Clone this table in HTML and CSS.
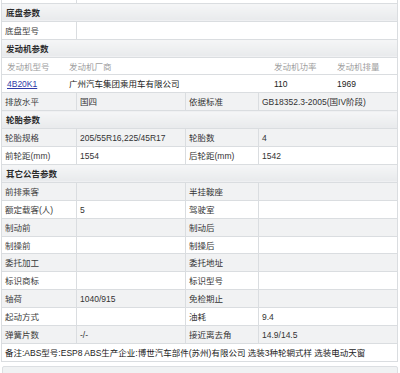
FILE: index.html
```html
<!DOCTYPE html>
<html lang="zh">
<head>
<meta charset="utf-8">
<link rel="stylesheet" href="styles.css">
</head>
<body>
<div class="wrap">
<table class="spec">
  <colgroup><col class="c1"><col class="c2"><col class="c3"><col class="c4"></colgroup>
  <tr class="stub"><td></td><td colspan="3"></td></tr>
  <tr class="head"><td colspan="4">底盘参数</td></tr>
  <tr><td>底盘型号</td><td colspan="3"></td></tr>
  <tr class="head"><td colspan="4">发动机参数</td></tr>
  <tr class="eng-row"><td colspan="4" class="eng-cell">
    <div class="eng eng-lbl"><span>发动机型号</span><span>发动机厂商</span><span>发动机功率</span><span>发动机排量</span></div>
  </td></tr>
  <tr class="eng-row"><td colspan="4" class="eng-cell">
    <div class="eng"><a href="#" class="link">4B20K1</a><span>广州汽车集团乘用车有限公司</span><span>110</span><span>1969</span></div>
  </td></tr>
  <tr class="alt"><td>排放水平</td><td>国四</td><td>依据标准</td><td>GB18352.3-2005(国IV阶段)</td></tr>
  <tr class="head"><td colspan="4">轮胎参数</td></tr>
  <tr class="alt"><td>轮胎规格</td><td>205/55R16,225/45R17</td><td>轮胎数</td><td>4</td></tr>
  <tr><td>前轮距(mm)</td><td>1554</td><td>后轮距(mm)</td><td>1542</td></tr>
  <tr class="head"><td colspan="4">其它公告参数</td></tr>
  <tr class="alt"><td>前排乘客</td><td></td><td>半挂鞍座</td><td></td></tr>
  <tr><td>额定载客(人)</td><td>5</td><td>驾驶室</td><td></td></tr>
  <tr class="alt"><td>制动前</td><td></td><td>制动后</td><td></td></tr>
  <tr><td>制操前</td><td></td><td>制操后</td><td></td></tr>
  <tr class="alt"><td>委托加工</td><td></td><td>委托地址</td><td></td></tr>
  <tr><td>标识商标</td><td></td><td>标识型号</td><td></td></tr>
  <tr class="alt"><td>轴荷</td><td>1040/915</td><td>免检期止</td><td></td></tr>
  <tr><td>起动方式</td><td></td><td>油耗</td><td>9.4</td></tr>
  <tr class="alt"><td>弹簧片数</td><td>-/-</td><td>接近离去角</td><td>14.9/14.5</td></tr>
  <tr class="note"><td colspan="4">备注:ABS型号:ESP8 ABS生产企业:博世汽车部件(苏州)有限公司 选装3种轮辋式样 选装电动天窗</td></tr>
</table>
<div class="next-box"></div>
</div>
</body>
</html>
```
FILE: styles.css
```css
html, body {
  margin: 0;
  padding: 0;
  background: #ffffff;
}
body {
  font-family: "Liberation Sans", "Noto Sans CJK SC", sans-serif;
  font-size: 8.5px;
  color: #333333;
}
.wrap {
  padding: 0 3px 0 1px;
}
.spec {
  width: 396px;
  border-collapse: collapse;
  table-layout: fixed;
}
.c1 { width: 75px; }
.c2 { width: 109px; }
.c3 { width: 73px; }
.c4 { width: 139px; }
.spec td {
  box-sizing: border-box;
  height: 17.9px;
  padding: 2px 0 0 3px;
  border: 1px solid #dadde0;
  vertical-align: middle;
  white-space: nowrap;
  overflow: hidden;
  line-height: 14.9px;
}
.spec tr.stub td {
  height: 3.3px;
  line-height: 1px;
  padding: 0;
  border-top: none;
}
.spec tr.head td {
  background: linear-gradient(#f5f6f7, #e8eaec);
  font-weight: bold;
  color: #2a2a2a;
  padding-left: 4px;
}
.spec tr.alt td {
  background: #f1f2f3;
}
.spec td:first-child {
  color: #3c3c3c;
}
.spec td.eng-cell {
  padding: 2px 0 0 0;
  border-top-color: #eceef0;
}
.eng {
  display: grid;
  grid-template-columns: 62px 205px 63px auto;
  padding-left: 5px;
  color: #222222;
}
.eng-lbl {
  color: #a0a0a0;
}
.link {
  color: #2f3aa8;
  text-decoration: underline;
}
.spec tr.note td {
  color: #222222;
}
.next-box {
  margin-top: 4px;
  margin-left: 1px;
  width: 394px;
  height: 14px;
  border: 1px solid #dcdfe2;
  border-radius: 2px 2px 0 0;
  background: #f0f2f3;
}
```
